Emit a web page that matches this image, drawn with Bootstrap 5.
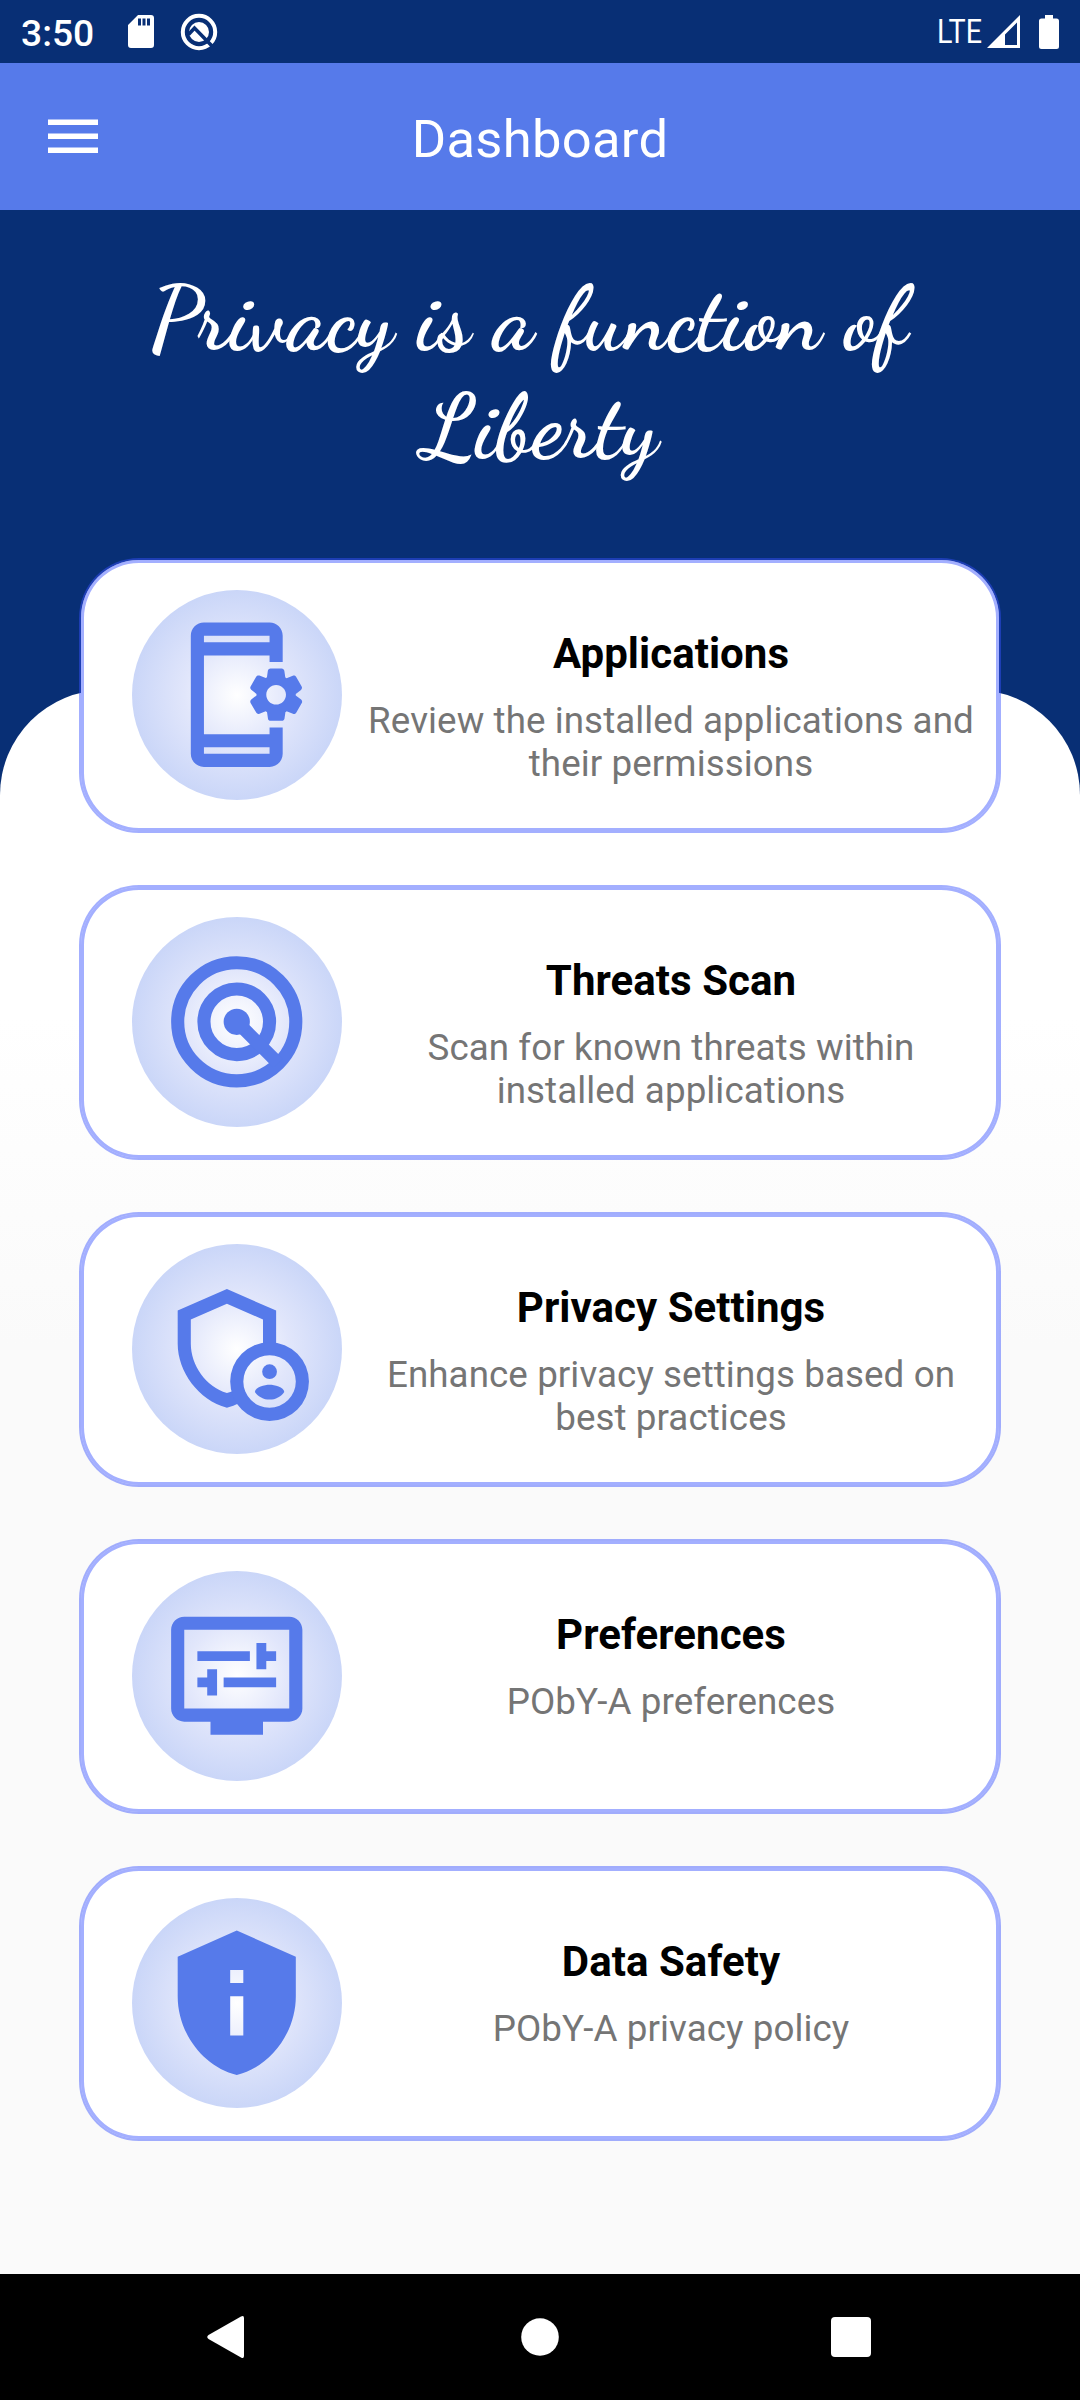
<!DOCTYPE html>
<html lang="en">
<head>
<meta charset="utf-8">
<meta name="viewport" content="width=device-width, initial-scale=1">
<title>Dashboard</title>
<link href="https://cdn.jsdelivr.net/npm/bootstrap@5.3.0/dist/css/bootstrap.min.css" rel="stylesheet">
<style>
:root{--navy:#082f75;--brand:#567aea}
body{width:1080px;height:2400px;font-family:Roboto,"Noto Sans",sans-serif;background:var(--navy);overflow:hidden}
svg{display:block;flex:none}
.statusbar{height:63px;padding:0 21px}
.clock{font-size:37.2px;font-weight:500;line-height:1;padding-top:4px;width:107px}
.network{overflow:visible}
.battery{margin-left:19px}
.appbar{height:147px;background:var(--brand);padding:0 36px}
.appbar-title{font-size:52.5px;font-weight:400;line-height:62px;padding-top:4px;letter-spacing:.3px}
.side{width:74px}
.hero{height:480px;padding-top:56px}
.motto{font-family:"Dancing Script","Liberation Serif",cursive;font-size:89.25px;line-height:107.5px;font-weight:700;margin:0;letter-spacing:.1px}
.sheet{height:1584px;border-radius:105px 105px 0 0;background:linear-gradient(#fff 327px,#fafafa 656px)}
.tiles{gap:56px;margin-top:-130px}
.tile{width:918px;height:271px;border:0;border-radius:58px;background:#fff;padding:30px 0 0 51px;
 box-shadow:0 0 0 2px rgba(55,81,255,.46),inset 0 0 0 3px rgba(55,81,255,.46)}
.disc{width:210px;height:210px;flex:none;background:radial-gradient(closest-side,#fff,#e1e6fb 50%,#cad6f8)}
.disc svg{width:157.5px;height:157.5px;fill:var(--brand)}
.tile-text{padding-top:39px;padding-left:1px}
.tile-title{font-size:42px;font-weight:700;line-height:49px;color:#000;margin:0 0 21px;letter-spacing:.05px}
.tile-desc{font-size:36.75px;line-height:43px;color:#757575;margin:0;letter-spacing:.08px}
.sysnav{height:126px}
</style>
</head>
<body class="d-flex flex-column">
<div class="statusbar d-flex align-items-center text-white">
  <div class="clock">3:50</div>
  <svg width="26" height="33" viewBox="0 0 26 33" fill="#fff"><path fill-rule="evenodd" d="M10 0H23a3 3 0 0 1 3 3V30a3 3 0 0 1-3 3H3a3 3 0 0 1-3-3V10ZM10 3.500V10.500H13V3.500ZM14.500 3.500V10.500H17.500V3.500ZM19 3.500V10.500H22V3.500Z"/></svg>
  <svg class="ms-4" width="40" height="38" viewBox="0 0 40 38"><circle cx="21" cy="19" r="16.200" fill="none" stroke="#fff" stroke-width="4"/><circle cx="21" cy="19" r="10" fill="#fff"/><path d="M10.500 21.500 16.500 15 34 33" fill="none" stroke="#082f75" stroke-width="3.600"/></svg>
  <svg class="network ms-auto" width="54" height="56" viewBox="0 0 54 56"><text x="8" y="39" font-size="33" fill="#fff" textLength="45" lengthAdjust="spacingAndGlyphs">LTE</text></svg>
  <svg class="ms-1" width="33" height="33" viewBox="0 0 33 33" fill="#fff"><path fill-rule="evenodd" d="M33 0V33H0ZM30 7.500 18 19.500V30H30Z"/></svg>
  <svg class="battery" width="20" height="34" viewBox="0 0 20 34" fill="#fff"><path d="M6 0H14V3.500H17.500A2.500 2.500 0 0 1 20 6V31.500A2.500 2.500 0 0 1 17.500 34H2.500A2.500 2.500 0 0 1 0 31.500V6A2.500 2.500 0 0 1 2.500 3.500H6Z"/></svg>
</div>
<header class="appbar d-flex align-items-center justify-content-between text-white">
  <div class="side"><svg width="74" height="36" viewBox="0 0 74 36" fill="#fff"><path d="M12 0.500H62V6H12ZM12 14.500H62V20H12ZM12 28.500H62V34H12Z"/></svg></div>
  <h1 class="appbar-title mb-0">Dashboard</h1>
  <div class="side"></div>
</header>
<section class="hero text-center text-white"><p class="motto">Privacy is a function of&nbsp;<br>Liberty</p></section>
<main class="sheet">
  <div class="tiles d-flex flex-column align-items-center">
    <article class="tile card flex-row align-items-start">
      <div class="disc rounded-circle d-flex align-items-center justify-content-center"><svg viewBox="0 0 24 24"><path d="m21.810 12.740-.820-.630v-.220l.800-.630c.160-.120.200-.340.100-.510l-.850-1.480c-.070-.130-.210-.200-.350-.200-.050 0-.100.010-.150.030l-.950.380c-.080-.050-.110-.070-.190-.110l-.150-1.010c-.030-.210-.200-.360-.400-.360h-1.710c-.200 0-.370.150-.400.340l-.140 1.010c-.030.020-.070.030-.100.050l-.090.060-.950-.380c-.050-.020-.100-.030-.150-.030-.140 0-.270.070-.350.200l-.850 1.480c-.100.170-.060.390.100.510l.800.630v.230l-.800.630c-.160.120-.200.340-.100.510l.850 1.480c.070.130.210.200.350.200.050 0 .100-.010.150-.030l.950-.370c.080.050.120.070.200.110l.150 1.010c.030.200.200.340.400.340h1.710c.200 0 .370-.150.400-.340l.150-1.010c.030-.020.070-.030.100-.050l.090-.060.950.380c.050.020.100.030.150.030.140 0 .270-.070.350-.200l.850-1.480c.100-.170.060-.390-.100-.510zM18 13.500c-.830 0-1.500-.670-1.500-1.500s.670-1.500 1.500-1.500 1.500.670 1.500 1.500-.670 1.500-1.500 1.500zM17 17h2v4c0 1.100-.900 2-2 2H7c-1.100 0-2-.900-2-2V3c0-1.100.900-2 2-2h10c1.100 0 2 .900 2 2v4h-2V6H7v12h10v-1zM7 3v1h10V3H7zm0 18h10v-1H7v1z"/></svg></div>
      <div class="tile-text flex-fill text-center"><h2 class="tile-title">Applications</h2><p class="tile-desc">Review the installed applications and<br>their permissions</p></div>
    </article>
    <article class="tile card flex-row align-items-start">
      <div class="disc rounded-circle d-flex align-items-center justify-content-center"><svg viewBox="0 0 24 24"><g fill="none" stroke="#567aea" stroke-width="2"><circle cx="12" cy="12" r="9"/><circle cx="12" cy="12" r="5"/><path d="m12 12 6.300 6.300"/></g><circle cx="12" cy="12" r="2"/></svg></div>
      <div class="tile-text flex-fill text-center"><h2 class="tile-title">Threats Scan</h2><p class="tile-desc">Scan for known threats within<br>installed applications</p></div>
    </article>
    <article class="tile card flex-row align-items-start">
      <div class="disc rounded-circle d-flex align-items-center justify-content-center"><svg viewBox="0 0 24 24"><g transform="translate(0 .4)"><path d="M16 10.800V7.150L10.500 4.750 5 7.150V10.850C5 14.160 7.330 17.440 10.500 18.350 10.850 18.250 11.200 18.110 11.540 17.950L12.400 19.850C11.800 20.140 11.160 20.400 10.500 20.600 6.190 19.460 3 15.100 3 10.850V5.780L10.500 2.500 18 5.780V10.800Z"/><path fill-rule="evenodd" d="M17 10.600a6 6 0 1 0 0 12 6 6 0 0 0 0-12Zm0 2a4 4 0 1 1 0 8 4 4 0 0 1 0-8Z"/><circle cx="17" cy="15.100" r="1.120"/><path d="M17 17.100c-.730 0-2.190.360-2.240 1.080.500.710 1.320 1.170 2.240 1.170s1.740-.460 2.240-1.170c-.050-.720-1.510-1.080-2.240-1.080Z"/></g></svg></div>
      <div class="tile-text flex-fill text-center"><h2 class="tile-title">Privacy Settings</h2><p class="tile-desc">Enhance privacy settings based on<br>best practices</p></div>
    </article>
    <article class="tile card flex-row align-items-start">
      <div class="disc rounded-circle d-flex align-items-center justify-content-center"><svg viewBox="0 0 24 24"><path d="M20 3H4c-1.100 0-2 .900-2 2v12c0 1.100.900 2 2 2h4v2h8v-2h4c1.100 0 2-.900 2-2V5c0-1.100-.900-2-2-2Zm0 14H4V5h16v12ZM6 8.250h8v1.500H6v-1.500Zm10.500 1.500H18v-1.500h-1.500V7H15v4h1.500V9.750ZM10 12.250h8v1.500h-8v-1.500ZM7.500 15H9v-4H7.500v1.250H6v1.500h1.500V15Z"/></svg></div>
      <div class="tile-text flex-fill text-center"><h2 class="tile-title">Preferences</h2><p class="tile-desc">PObY-A preferences</p></div>
    </article>
    <article class="tile card flex-row align-items-start">
      <div class="disc rounded-circle d-flex align-items-center justify-content-center"><svg viewBox="0 0 24 24"><path fill-rule="evenodd" d="M12 1 3 5v6c0 5.550 3.840 10.740 9 12 5.160-1.260 9-6.450 9-12V5l-9-4Zm-1 6h2v2h-2V7Zm0 4h2v6h-2v-6Z"/></svg></div>
      <div class="tile-text flex-fill text-center"><h2 class="tile-title">Data Safety</h2><p class="tile-desc">PObY-A privacy policy</p></div>
    </article>
  </div>
</main>
<nav class="sysnav bg-black"><svg width="1080" height="126" viewBox="0 0 1080 126" fill="#fff"><path d="M241 42.500 208.500 61Q206 63 208.500 65L241 83.500Q244 85 244 82V44Q244 41 241 42.500Z"/><circle cx="540" cy="63" r="18.800"/><rect x="831" y="43" width="40" height="40" rx="4"/></svg></nav>
<script src="https://cdn.jsdelivr.net/npm/bootstrap@5.3.0/dist/js/bootstrap.bundle.min.js"></script>
</body>
</html>
